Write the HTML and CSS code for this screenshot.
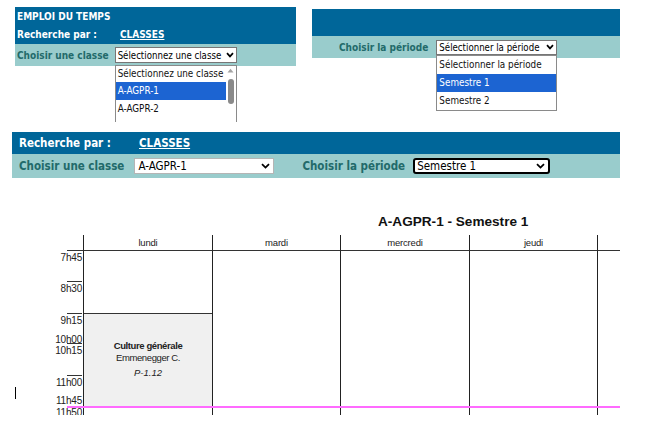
FILE: index.html
```html
<!DOCTYPE html>
<html lang="fr">
<head>
  <meta charset="UTF-8" />
  <title>Emploi du temps</title>
  <link rel="stylesheet" href="styles.css">
</head>
<body>

  <div class="top">
    <div class="panel panel-left">
      <div class="bar bar-title">EMPLOI DU TEMPS</div>
      <div class="bar bar-search">
        <span class="search-label">Recherche par :</span>
        <a class="search-link" href="#">CLASSES</a>
      </div>
      <div class="row">
        <span class="row-label">Choisir une classe</span>
        <div class="select-wrap">
          <div class="select select-small">
            <span>Sélectionnez une classe</span>
            <svg class="chevron" width="8" height="6" viewBox="0 0 8 6"><path d="M1 1.2 L4 4.4 L7 1.2" fill="none" stroke="#000" stroke-width="1.7"/></svg>
          </div>
          <div class="listbox listbox-classes">
            <div class="option">Sélectionnez une classe</div>
            <div class="option selected">A-AGPR-1</div>
            <div class="option">A-AGPR-2</div>
            <div class="scrollbar">
              <svg class="scroll-up" width="7" height="5" viewBox="0 0 7 5"><path d="M0.5 4.5 L3.5 0.8 L6.5 4.5 Z" fill="#a3a3a3"/></svg>
              <div class="scroll-thumb"></div>
            </div>
          </div>
        </div>
      </div>
    </div>

    <div class="panel panel-right">
      <div class="bar bar-blank"></div>
      <div class="row row-right">
        <span class="row-label">Choisir la période</span>
        <div class="select-wrap">
          <div class="select select-small select-period">
            <span>Sélectionner la période</span>
            <svg class="chevron" width="8" height="6" viewBox="0 0 8 6"><path d="M1 1.2 L4 4.4 L7 1.2" fill="none" stroke="#000" stroke-width="1.7"/></svg>
          </div>
          <div class="listbox listbox-period">
            <div class="option">Sélectionner la période</div>
            <div class="option selected">Semestre 1</div>
            <div class="option">Semestre 2</div>
          </div>
        </div>
      </div>
    </div>
  </div>

  <div class="filters">
    <div class="bar bar-search2">
      <span class="search-label2">Recherche par :</span>
      <a class="search-link" href="#">CLASSES</a>
    </div>
    <div class="row row-filters">
      <span class="row-label">Choisir une classe</span>
      <div class="select select-big select-class">
        <span>A-AGPR-1</span>
        <svg class="chevron" width="9" height="6" viewBox="0 0 9 6"><path d="M1 1.2 L4.5 4.6 L8 1.2" fill="none" stroke="#000" stroke-width="1.8"/></svg>
      </div>
      <span class="row-label label-period">Choisir la période</span>
      <div class="select select-big select-focus">
        <span>Semestre 1</span>
        <svg class="chevron" width="9" height="6" viewBox="0 0 9 6"><path d="M1 1.2 L4.5 4.6 L8 1.2" fill="none" stroke="#000" stroke-width="1.8"/></svg>
      </div>
    </div>
  </div>

  <div class="schedule">
    <h2>A-AGPR-1 - Semestre 1</h2>
    <div class="grid">
      <div class="grid-head">
        <div class="corner"></div>
        <div class="day-name">lundi</div>
        <div class="day-name">mardi</div>
        <div class="day-name">mercredi</div>
        <div class="day-name">jeudi</div>
        <div class="day-name"></div>
      </div>
      <div class="grid-body">
        <div class="times">
          <div class="time" style="top: 0px">7h45</div>
          <div class="time tick" style="top: 30px">8h30</div>
          <div class="time tick" style="top: 62px">9h15</div>
          <div class="time" style="top: 82px">10h00</div>
          <div class="time tick" style="top: 92px">10h15</div>
          <div class="time tick" style="top: 124px">11h00</div>
          <div class="time" style="top: 143px">11h45</div>
          <div class="time" style="top: 155px">11h50</div>
        </div>
        <div class="day">
          <div class="course" style="top: 62px; height: 93px">
            <div class="course-name">Culture générale</div>
            <div class="course-teacher">Emmenegger C.</div>
            <div class="course-room">P-1.12</div>
          </div>
        </div>
        <div class="day"></div>
        <div class="day"></div>
        <div class="day"></div>
        <div class="day"></div>
        <div class="now-line" style="top: 155px"></div>
      </div>
    </div>
    <span class="caret"></span>
  </div>

</body>
</html>
```

FILE: styles.css
```css
/* Reset */
* {
  margin: 0; padding: 0; box-sizing: border-box;
}
html, body {
  width: 653px;
  height: 428px;
  overflow: hidden;
  background: #fff;
  font-family: "DejaVu Sans Condensed", "Liberation Sans", sans-serif;
}

/* Bandeaux */
.top {
  display: flex;
  align-items: flex-start;
  gap: 16px;
  padding: 7px 0 0 15px;
}
.panel-left {
  width: 281px;
}
.panel-right {
  width: 308px;
  margin-top: 2px;
}
.bar {
  background: #006699;
  color: #fff;
  font-weight: bold;
  font-size: 10px;
}
.bar-title {
  height: 19px;
  line-height: 19px;
  padding-left: 2px;
}
.bar-search {
  display: flex;
  height: 18px;
  line-height: 18px;
  padding-left: 2px;
}
.search-label {
  width: 103px;
}
.search-link {
  color: #fff;
  text-decoration: underline;
}
.bar-blank {
  height: 27px;
}

.row {
  display: flex;
  align-items: center;
  height: 22px;
  padding-left: 2px;
  background: #99cccc;
}
.row-label {
  color: #226a6a;
  font-weight: bold;
  font-size: 10px;
  margin-right: 6px;
}
.row-right {
  padding-left: 27px;
}
.row-right .row-label {
  margin-right: 8px;
}

/* Listes déroulantes */
.select-wrap {
  position: relative;
}
.select {
  display: flex;
  align-items: center;
  justify-content: space-between;
  background: #fff;
  border: 1px solid #767676;
  color: #000;
  white-space: nowrap;
}
.select-small {
  width: 122px;
  height: 16px;
  padding: 0 2px 0 2px;
  font-size: 9.6px;
}
.select-period {
  width: 121px;
  height: 15px;
}
.chevron {
  flex: none;
}

.listbox {
  position: absolute;
  left: 0;
  background: #fff;
  border: 1px solid #8a8a8a;
  font-size: 9.8px;
  color: #111;
  z-index: 5;
}
.listbox-classes {
  top: 18px;
  width: 122px;
  height: 57px;
  border-bottom: none;
  overflow: hidden;
  padding-right: 10px;
}
.listbox-period {
  top: 15px;
  width: 121px;
}
.option {
  height: 18px;
  line-height: 18px;
  padding-left: 2px;
  white-space: nowrap;
}
.listbox-classes .option:first-child {
  height: 16px;
  line-height: 16px;
}
.option.selected {
  background: #1c64d2;
  color: #fff;
}
.scrollbar {
  position: absolute;
  top: 0; right: 0; bottom: 0;
  width: 10px;
  background: #fff;
}
.scroll-up {
  position: absolute;
  top: 2px;
  left: 1px;
}
.scroll-thumb {
  position: absolute;
  top: 13px;
  left: 2px;
  width: 6px;
  height: 25px;
  border-radius: 3px;
  background: #8a8a8a;
}

/* Second bandeau */
.filters {
  width: 608px;
  margin: 66px 0 0 12px;
}
.bar-search2 {
  display: flex;
  height: 22px;
  line-height: 22px;
  padding-left: 7px;
  font-size: 11.5px;
}
.search-label2 {
  width: 120px;
}
.row-filters {
  height: 24px;
  padding-left: 7px;
}
.row-filters .row-label {
  font-size: 11.5px;
  margin-right: 10px;
}
.row-filters .label-period {
  margin-left: 28px;
  margin-right: 8px;
}
.select-big {
  height: 16px;
  padding: 0 3px 0 3px;
  font-size: 11.5px;
}
.select-class {
  width: 140px;
  border-color: #b5b5b5;
}
.select-focus {
  width: 137px;
  border: 2px solid #000;
  border-radius: 3px;
  padding-left: 2px;
}

/* Emploi du temps */
.schedule {
  position: relative;
}
.schedule h2 {
  margin: 36px 0 0 378px;
  font-family: "Liberation Sans", Arial, sans-serif;
  font-size: 13.6px;
  line-height: 16px;
  color: #111;
  white-space: nowrap;
}
.grid {
  margin: 5px 0 0 52px;
  width: 568px;
  height: 180px;
  overflow: hidden;
  font-family: "Liberation Sans", Arial, sans-serif;
  font-size: 9.5px;
  color: #222;
}
.grid-head,
.grid-body {
  display: grid;
  grid-template-columns: 31px 129px 128px 129px 128px 128px;
}
.grid-head {
  height: 16px;
}
.corner {
  margin-left: 15px;
  border-bottom: 1px solid #333;
}
.day-name {
  border-left: 1px solid #222;
  border-bottom: 1px solid #333;
  text-align: center;
  line-height: 15px;
  letter-spacing: -0.2px;
}
.grid-body {
  position: relative;
  height: 164px;
}
.times {
  position: relative;
}
.time {
  position: absolute;
  right: 1px;
  line-height: 11px;
  padding-top: 1px;
  font-size: 10px;
  letter-spacing: -0.2px;
}
.time.tick {
  left: 15px;
  text-align: right;
  direction: rtl;
  white-space: nowrap;
  border-top: 1px solid #333;
}
.day {
  position: relative;
  border-left: 1px solid #222;
}
.course {
  position: absolute;
  left: 0;
  right: 0;
  background: #f0f0f0;
  border-top: 1px solid #333;
  padding-top: 26px;
  text-align: center;
  font-size: 9.5px;
  letter-spacing: -0.4px;
  line-height: 12px;
}
.course-name {
  font-weight: bold;
}
.course-room {
  font-style: italic;
  margin-top: 3px;
  letter-spacing: 0;
}
.now-line {
  position: absolute;
  left: 15px;
  right: 0;
  height: 2px;
  background: #ff6bff;
}
.caret {
  position: absolute;
  left: 15px;
  top: 173px;
  width: 1px;
  height: 12px;
  background: #000;
}
```
